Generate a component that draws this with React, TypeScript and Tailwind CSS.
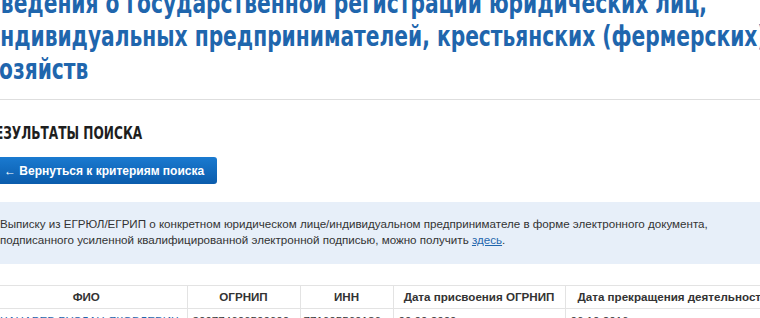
import React from "react";

export default function App() {
  const narrow = { fontFamily: '"DejaVu Sans Condensed", "DejaVu Sans", sans-serif', fontStretch: "condensed" } as React.CSSProperties;
  const titleLines = [
    "Сведения о государственной регистрации юридических лиц,",
    "индивидуальных предпринимателей, крестьянских (фермерских)",
    "хозяйств",
  ];
  return (
    <div className="w-[760px] h-[318px] overflow-hidden bg-white" style={{ fontFamily: '"Liberation Sans", Arial, sans-serif' }}>
      <div className="-ml-[14px] w-[800px]">
        <h1 className="-mt-[13px] text-[29px] leading-[33px] font-bold text-[#1f66ad]" style={narrow}>
          {titleLines.map((l) => (
            <span key={l} className="block whitespace-nowrap origin-left scale-x-[0.775]">
              {l}
            </span>
          ))}
        </h1>
        <div className="mt-[13px] h-px bg-[#dedede]" />
        <h2 className="mt-[23px] text-[18px] leading-[20px] font-bold text-[#1e1e1e] uppercase" style={narrow}>
          <span className="block whitespace-nowrap origin-left scale-x-[0.75]">Результаты поиска</span>
        </h2>
        <div className="mt-[14px]">
          <button className="h-[27px] w-[231px] rounded-[3px] bg-gradient-to-b from-[#1a7ad0] to-[#0b5cac] text-white text-[12px] font-bold text-left pl-[18px]">
            ← Вернуться к критериям поиска
          </button>
        </div>
        <div className="mt-[18px] h-[62px] bg-[#e7eff9] pl-[14px] pt-[14px] text-[11.6px] leading-[16px] text-[#333]">
          Выписку из ЕГРЮЛ/ЕГРИП о конкретном юридическом лице/индивидуальном предпринимателе в форме электронного документа,
          <br />
          подписанного усиленной квалифицированной электронной подписью, можно получить{" "}
          <a className="text-[#1f66ad] underline">здесь</a>.
        </div>
        <table className="mt-[21px] border-collapse text-[11.6px] text-[#333]">
          <thead>
            <tr className="h-[23px]">
              <th className="w-[201px] border-t border-[#e3e3e3] font-bold text-center">ФИО</th>
              <th className="w-[113px] border-t border-l border-[#e3e3e3] font-bold text-center">ОГРНИП</th>
              <th className="w-[93px] border-t border-l border-[#e3e3e3] font-bold text-center">ИНН</th>
              <th className="w-[172px] border-t border-l border-[#e3e3e3] font-bold text-center">Дата присвоения ОГРНИП</th>
              <th className="w-[220px] border-t border-l border-[#e3e3e3] font-bold text-left pl-[12px] whitespace-nowrap">Дата прекращения деятельности</th>
            </tr>
          </thead>
          <tbody>
            <tr className="h-[23px] border-t border-[#e3e3e3]">
              <td className="pl-[14px] text-[#1f66ad] whitespace-nowrap">ЧАЦАРЕВ РУСЛАН ЯКОВЛЕВИЧ</td>
              <td className="pl-[5px] border-l border-[#e3e3e3]">309774606500600</td>
              <td className="pl-[3px] border-l border-[#e3e3e3]">771605560186</td>
              <td className="pl-[5px] border-l border-[#e3e3e3]">09.09.2009</td>
              <td className="pl-[5px] border-l border-[#e3e3e3]">06.10.2016</td>
            </tr>
          </tbody>
        </table>
      </div>
    </div>
  );
}
